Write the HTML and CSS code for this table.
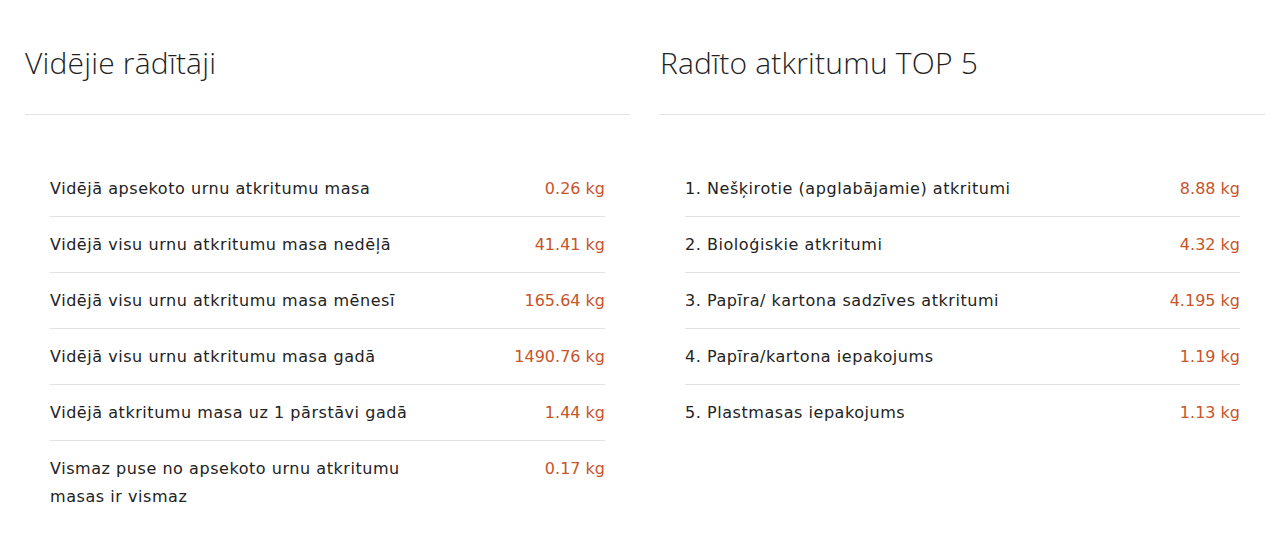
FILE: index.html
```html
<!DOCTYPE html>
<html lang="lv">
<head>
<meta charset="utf-8">
<title>Rādītāji</title>
<link rel="stylesheet" href="styles.css">
</head>
<body>
<main class="page">
  <section class="panel">
    <h2 class="panel-title">Vidējie rādītāji</h2>
    <ul class="rows">
      <li class="row"><span class="label">Vidējā apsekoto urnu atkritumu masa</span><span class="value">0.26 kg</span></li>
      <li class="row"><span class="label">Vidējā visu urnu atkritumu masa nedēļā</span><span class="value">41.41 kg</span></li>
      <li class="row"><span class="label">Vidējā visu urnu atkritumu masa mēnesī</span><span class="value">165.64 kg</span></li>
      <li class="row"><span class="label">Vidējā visu urnu atkritumu masa gadā</span><span class="value">1490.76 kg</span></li>
      <li class="row"><span class="label">Vidējā atkritumu masa uz 1 pārstāvi gadā</span><span class="value">1.44 kg</span></li>
      <li class="row"><span class="label">Vismaz puse no apsekoto urnu atkritumu masas ir vismaz</span><span class="value">0.17 kg</span></li>
    </ul>
  </section>
  <section class="panel">
    <h2 class="panel-title">Radīto atkritumu TOP 5</h2>
    <ul class="rows">
      <li class="row"><span class="label">1. Nešķirotie (apglabājamie) atkritumi</span><span class="value">8.88 kg</span></li>
      <li class="row"><span class="label">2. Bioloģiskie atkritumi</span><span class="value">4.32 kg</span></li>
      <li class="row"><span class="label">3. Papīra/ kartona sadzīves atkritumi</span><span class="value">4.195 kg</span></li>
      <li class="row"><span class="label">4. Papīra/kartona iepakojums</span><span class="value">1.19 kg</span></li>
      <li class="row"><span class="label">5. Plastmasas iepakojums</span><span class="value">1.13 kg</span></li>
    </ul>
  </section>
</main>
</body>
</html>
```

FILE: styles.css
```css
* { box-sizing: border-box; }
html, body { margin: 0; padding: 0; background: #ffffff; }
body {
  font-family: "DejaVu Sans", "Open Sans", sans-serif;
  color: #222222;
}
.page {
  display: grid;
  grid-template-columns: 605px 605px;
  column-gap: 30px;
  padding: 0 11px 0 25px;
}
.panel { display: flex; flex-direction: column; }
.panel-title {
  margin: 0;
  padding-top: 43px;
  height: 115px;
  font-family: "Open Sans", "Noto Sans", sans-serif;
  font-size: 30px;
  line-height: 40px;
  font-weight: 300;
  letter-spacing: 0.2px;
  color: #1f1f1f;
  border-bottom: 1px solid #e2e2e2;
}
.rows {
  list-style: none;
  margin: 46px 0 0;
  padding: 0 25px;
}
.row {
  display: flex;
  justify-content: space-between;
  align-items: flex-start;
  padding: 14px 0 13px;
  border-bottom: 1px solid #e2e2e2;
  font-size: 16px;
  line-height: 28px;
}
.row:last-child { border-bottom: none; }
.label { max-width: 360px; color: #222222; letter-spacing: 0.55px; }
.value { color: #c8542a; white-space: nowrap; }
```
